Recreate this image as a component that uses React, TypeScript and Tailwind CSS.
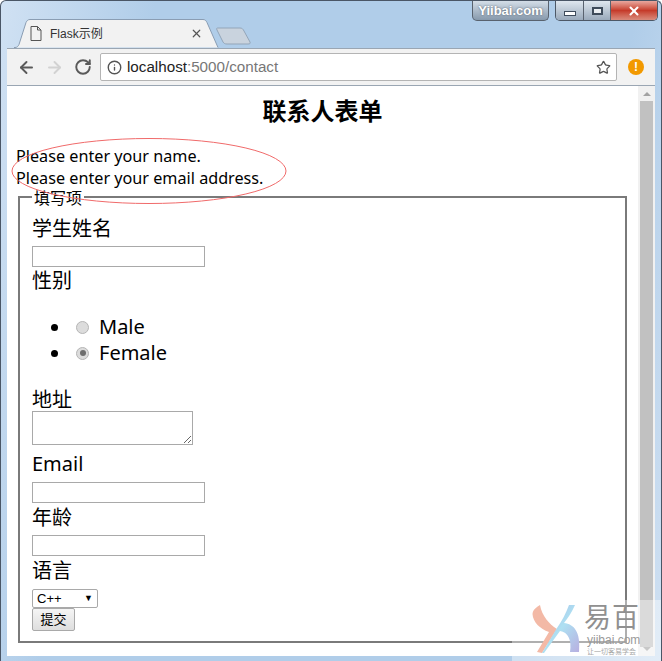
import React from 'react';
import { ArrowLeft, ArrowRight, RotateCw, Info, Star, X } from 'lucide-react';

const cjk = '"Liberation Sans", "Noto Sans CJK SC", sans-serif';
const latin = '"Noto Sans", "Noto Sans CJK SC", sans-serif';

const TabShape = () => (
  <svg width="206" height="29" viewBox="0 0 206 29" className="absolute left-0 top-0">
    <path d="M0 28.5H1C3 28.5 4 27.5 5 25.5L12 3.5C13 1.5 14 .5 16 .5H189C191 .5 192 1.5 193 3.5L204 28.5" fill="#f2f2f2" stroke="#8a9db3" />
  </svg>
);

const NewTabShape = () => (
  <svg width="36" height="18" viewBox="0 0 36 18">
    <path d="M1.5 1H24C26 1 27 2 28 4L34 15C34.5 16.5 34 17 32 17H11C9 17 8 16.5 7 15L1 3C.5 1.5 .5 1 1.5 1Z" fill="#c9d3de" stroke="#93a5b8" />
  </svg>
);

const Field = ({ label, h = 'h-[24px]' }: { label: string; h?: string }) => (
  <div className={`${h} text-[20px] leading-[24px] text-black`}>{label}</div>
);

const TextBox = () => (
  <input className="block h-[21px] w-[173px] border border-[#a9a9a9] bg-white" readOnly />
);

const Radio = ({ checked }: { checked?: boolean }) => (
  <span className="flex h-[13px] w-[13px] items-center justify-center rounded-full border border-[#b5b5b5] bg-[#dcdcdc]">
    {checked && <span className="h-[6px] w-[6px] rounded-full bg-[#6e6e6e]" />}
  </span>
);

const Choice = ({ label, checked }: { label: string; checked?: boolean }) => (
  <li className="flex h-[26px] items-center">
    <span className="ml-[19px] h-[7px] w-[7px] rounded-full bg-black" />
    <span className="ml-[18px]"><Radio checked={checked} /></span>
    <span className="ml-[10px] text-[20px] leading-[26px] text-black" style={{ fontFamily: latin }}>{label}</span>
  </li>
);

export default function App() {
  return (
    <div className="relative flex h-[661px] w-[662px] flex-col overflow-hidden rounded-t-[6px] border-x border-t border-[#4a5666] bg-[linear-gradient(100deg,#d0e1f3_0%,#b0cde9_20%,#b0cde9_82%,#cfe0f2_100%)] px-[6px] pb-[5px]" style={{ fontFamily: cjk }}>
      {/* title bar */}
      <div className="relative flex h-[47px] shrink-0 items-end">
        <div className="relative ml-[7px] flex h-[29px] w-[204px] items-center">
          <TabShape />
          <svg width="12" height="15" viewBox="0 0 12 15" className="relative ml-[16px]" fill="none" stroke="#555">
            <path d="M1 .5H7.5L11 4V14.5H1ZM7.5 .5V4H11" />
          </svg>
          <span className="relative ml-[8px] text-[12px] text-[#333]">Flask示例</span>
          <X size={13} strokeWidth={2.2} className="relative ml-[87px] text-[#555]" />
        </div>
        <div className="mb-[3px] ml-[-2px]"><NewTabShape /></div>
      </div>

      {/* toolbar */}
      <div className="flex h-[38px] shrink-0 items-center border-y border-[#9aa6b3] bg-[#f2f2f2]">
        <ArrowLeft size={19} strokeWidth={2.4} className="ml-[10px] text-[#5a5a5a]" />
        <ArrowRight size={19} strokeWidth={2.4} className="ml-[9px] text-[#d2d2d2]" />
        <RotateCw size={18} strokeWidth={2.6} className="ml-[10px] text-[#5a5a5a]" />
        <div className="ml-[8px] flex h-[28px] w-[517px] items-center rounded-[2px] border border-[#b4b4b4] bg-white">
          <Info size={15} strokeWidth={2.2} className="ml-[6px] text-[#555]" />
          <span className="ml-[5px] text-[15.2px] text-[#222]">localhost<span className="text-[#777]">:5000/contact</span></span>
          <Star size={15} strokeWidth={2} className="ml-auto mr-[5px] text-[#555]" />
        </div>
        <span className="ml-[11px] flex h-[16px] w-[16px] items-center justify-center rounded-full bg-[#f29900] text-[12px] font-bold leading-none text-white">!</span>
      </div>

      {/* page + scrollbar */}
      <div className="flex min-h-0 flex-1 bg-white">
        <main className="w-[631px] overflow-hidden pt-[9px] text-black">
          <h1 className="h-[34px] text-center text-[24px] font-bold leading-[34px]">联系人表单</h1>
          <div className="ml-[9px] mt-[16px] text-[16.2px] leading-[22px]" style={{ fontFamily: latin }}>
            <div>Please enter your name.</div>
            <div>Please enter your email address.</div>
          </div>
          <fieldset className="ml-[11px] mt-[1px] h-[453px] w-[609px] border-2 border-[#7a7a7a] px-[12px]">
            <legend className="px-[2px] text-[16px] leading-[14px]"><span className="relative top-[2px]">填写项</span></legend>
            <div className="mt-[13px]"><Field label="学生姓名" h="h-[26px]" /></div>
            <div className="mt-[3px]"><TextBox /></div>
            <div className="mt-[2px]"><Field label="性别" /></div>
            <ul className="mt-[21px]">
              <Choice label="Male" />
              <Choice label="Female" checked />
            </ul>
            <div className="mt-[22px]"><Field label="地址" h="h-[23px]" /></div>
            <textarea className="block h-[34px] w-[161px] resize-y border border-[#a9a9a9] bg-white" readOnly />
            <div className="mt-[7px] h-[30px] text-[20px] leading-[24px]" style={{ fontFamily: latin }}>Email</div>
            <TextBox />
            <div className="mt-[3px]"><Field label="年龄" h="h-[29px]" /></div>
            <TextBox />
            <div className="mt-[3px]"><Field label="语言" h="h-[30px]" /></div>
            <div className="relative flex h-[19px] w-[66px] items-center rounded-[2px] border border-[#a9a9a9] bg-white pl-[4px] text-[13px]">
              C++
              <span className="absolute right-[4px] top-[2px] text-[9px]">▼</span>
            </div>
            <button className="block h-[23px] w-[43px] rounded-[2px] border border-[#a9a9a9] bg-gradient-to-b from-[#f5f5f5] to-[#dedede] text-[13px] text-black">提交</button>
          </fieldset>
        </main>
        <div className="flex w-[17px] shrink-0 flex-col items-center bg-[#f1f1f1]">
          <span className="mt-[6px] h-0 w-0 border-x-[4px] border-b-[4px] border-x-transparent border-b-[#a3a3a3]" />
          <div className="mt-[5px] h-[550px] w-[13px] bg-[#c1c1c1]" />
          <span className="mt-auto mb-[5px] h-0 w-0 border-x-[4px] border-t-[4px] border-x-transparent border-t-[#a3a3a3]" />
        </div>
      </div>

      {/* window buttons */}
      <div className="absolute right-[112px] top-0 flex h-[20px] w-[77px] items-center justify-center rounded-b-[5px] border border-t-0 border-[#59626e] bg-gradient-to-b from-[#d3dde7] to-[#8799ac] text-[13px] font-bold text-white [text-shadow:0_0_2px_#4d5866]">Yiibai.com</div>
      <div className="absolute right-[3px] top-0 flex h-[20px] w-[103px] overflow-hidden rounded-b-[5px] border border-t-0 border-[#4d5866]">
        <div className="flex w-[28px] items-center justify-center border-r border-[#59626e] bg-gradient-to-b from-[#dfe7ef] to-[#9aaabb]"><span className="mt-[5px] h-[5px] w-[12px] border border-[#3e4b5a] bg-white" /></div>
        <div className="flex w-[27px] items-center justify-center border-r border-[#59626e] bg-gradient-to-b from-[#dfe7ef] to-[#9aaabb]"><span className="h-[8px] w-[11px] border-2 border-[#3e4b5a] bg-white/70" /></div>
        <div className="flex flex-1 items-center justify-center bg-gradient-to-b from-[#e8a79f] via-[#c53a2a] to-[#d98a7c]"><X size={14} strokeWidth={3.5} className="text-white" /></div>
      </div>

      {/* red annotation */}
      <svg width="290" height="72" viewBox="0 0 290 72" className="absolute left-[9px] top-[135px]" fill="none">
        <ellipse cx="139" cy="35" rx="137" ry="32.5" stroke="#f06a6a" />
      </svg>

      {/* watermark */}
      <div className="absolute bottom-0 right-0 h-[61px] w-[149px] bg-white/40">
        <svg width="50" height="50" viewBox="0 0 50 50" className="absolute left-[20px] top-[4px]">
          <defs>
            <linearGradient id="wmBlue" x1="0" y1="0" x2="1" y2="1">
              <stop offset="0%" stopColor="#a9b6e6" />
              <stop offset="50%" stopColor="#aee0f2" />
              <stop offset="100%" stopColor="#b8aee0" />
            </linearGradient>
          </defs>
          <path d="M8 1C5 3 1 5 .5 10C1 18 8 25 17 28L5 48L10 49L25 25C17 20 10 12 8 1Z" fill="#f3b9a6" />
          <path d="M37 1L43 1C40 8 36 14 32 19C42 20 49 28 47 48L38 48C40 36 36 28 28 27L12 49L10 49L25 24C30 17 34 9 37 1Z" fill="url(#wmBlue)" />
        </svg>
        <div className="absolute left-[72px] top-[0px] text-[27px] leading-[36px] tracking-[1px] text-[#909090]">易百</div>
        <div className="absolute left-[75px] top-[33px] text-[12px] leading-[14px] text-[#9a9a9a]">yiibai.com</div>
        <div className="absolute left-[75px] top-[47px] text-[7px] leading-[10px] text-[#a8a8a8]">让一切客易学会</div>
      </div>
    </div>
  );
}
